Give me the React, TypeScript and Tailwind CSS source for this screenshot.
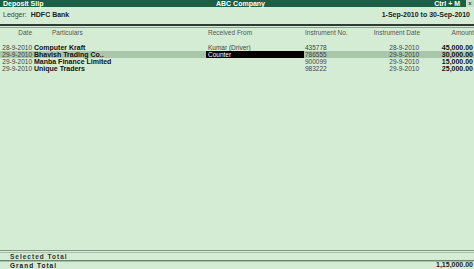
import React from 'react';

const rows = [
  { date: '28-9-2010', name: 'Computer Kraft', from: 'Kumar (Driver)', no: '435778', idate: '28-9-2010', amt: '45,000.00' },
  { date: '29-9-2010', name: 'Bhavish Trading Co..', from: 'Counter', no: '786555', idate: '29-9-2010', amt: '30,000.00', sel: true },
  { date: '29-9-2010', name: 'Manba Finance Limited', from: '', no: '900099', idate: '29-9-2010', amt: '15,000.00' },
  { date: '29-9-2010', name: 'Unique Traders', from: '', no: '983222', idate: '29-9-2010', amt: '25,000.00' },
];

const App = () => {
  return (
    <div className="w-[474px] h-[269px] overflow-hidden bg-[#d3ecd3] flex flex-col text-[#222] font-['Liberation_Sans',Arial,sans-serif]">
      {/* title bar */}
      <div className="h-[7px] bg-[#1c5f45] flex items-center text-white text-[7px] leading-[7px] font-bold">
        <span className="pl-[3px] w-[200px]">Deposit Slip</span>
        <span className="flex-1 pl-[16px]">ABC Company</span>
        <span className="pr-[6px]">Ctrl + M</span>
        <span className="w-[8px] h-[7px] bg-[#c9dccb] text-[#1c5f45] text-[6px] text-center">x</span>
      </div>

      {/* ledger */}
      <div className="h-[15px] flex items-center text-[7px] pt-[1px]">
        <span className="pl-[3px] text-[#444]">Ledger:</span>
        <span className="pl-[4px] font-bold">HDFC Bank</span>
        <span className="ml-auto pr-[4px] font-bold">1-Sep-2010 to 30-Sep-2010</span>
      </div>

      <div className="mt-[2px] h-[2px] bg-[#2f3a33]" />
      <div className="mt-[1px] h-[1px] bg-[#8aa58f]" />

      {/* column header */}
      <div className="h-[7px] mt-[1px] flex items-center text-[6.5px] text-[#555]">
        <span className="w-[32px] text-right">Date</span>
        <span className="w-[174px] pl-[20px]">Particulars</span>
        <span className="w-[99px] pl-[2px]">Received From</span>
        <span className="w-[68px]">Instrument No.</span>
        <span className="w-[47px] text-right">Instrument Date</span>
        <span className="flex-1 text-right">Amount</span>
      </div>

      {/* entries */}
      <div className="mt-[8px] flex flex-col">
        {rows.map((r) => (
          <div key={r.no} className={`h-[7px] flex items-center text-[7px] leading-[7px] ${r.sel ? 'bg-[#a9c6aa]' : ''}`}>
            <span className="w-[32px] text-right text-[6.5px] text-[#444]">{r.date}</span>
            <span className="w-[174px] pl-[2px] font-bold text-[#111]">{r.name}</span>
            <span className={`w-[98px] h-[7px] pl-[2px] text-[6.5px] ${r.sel ? 'bg-black text-white' : 'text-[#444]'}`}>{r.from}</span>
            <span className="w-[69px] pl-[1px] text-[6.5px] text-[#444]">{r.no}</span>
            <span className="w-[46px] text-right text-[6.5px] text-[#444]">{r.idate}</span>
            <span className="flex-1 text-right font-bold pr-[1px] text-[#111]">{r.amt}</span>
          </div>
        ))}
      </div>

      <div className="flex-1" />

      {/* totals */}
      <div className="h-[1px] bg-[#7d9581]" />
      <div className="h-[1px] mt-[1px] bg-[#a9bfac]" />
      <div className="h-[7px] flex items-center text-[6.5px] font-bold tracking-[1px] text-[#333] pl-[10px]">Selected Total</div>
      <div className="h-[1px] bg-[#6b8470]" />
      <div className="h-[1px] bg-[#a9bfac]" />
      <div className="h-[7px] flex items-center text-[6.5px] font-bold text-[#222]">
        <span className="pl-[10px] tracking-[1px]">Grand Total</span>
        <span className="ml-auto pr-[1px] text-[7px] tracking-normal">1,15,000.00</span>
      </div>
    </div>
  );
};

export default App;
